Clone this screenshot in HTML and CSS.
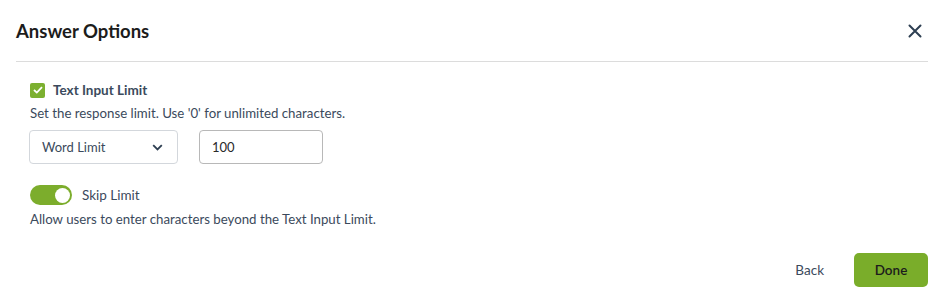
FILE: index.html
```html
<!DOCTYPE html>
<html lang="en">
<head>
    <meta charset="UTF-8">
    <title>Answer Options</title>
    <link rel="stylesheet" href="styles.css">
</head>
<body>
    <div class="modal">
        <header class="modal-header">
            <h2>Answer Options</h2>
            <button class="close-btn" aria-label="Close">
                <svg width="14" height="14" viewBox="0 0 14 14">
                    <path d="M1.5 1.5 L12.5 12.5 M12.5 1.5 L1.5 12.5" stroke="#2e3f52" stroke-width="2" stroke-linecap="round"/>
                </svg>
            </button>
        </header>

        <section class="modal-body">
            <label class="check-row">
                <span class="checkbox">
                    <svg width="10" height="8" viewBox="0 0 10 8">
                        <path d="M1 4 L3.8 6.6 L9 1.2" fill="none" stroke="#fff" stroke-width="1.8"/>
                    </svg>
                </span>
                <span class="check-label">Text Input Limit</span>
            </label>
            <p class="hint">Set the response limit. Use '0' for unlimited characters.</p>

            <div class="limit-row">
                <div class="select">
                    <span>Word Limit</span>
                    <svg width="11" height="7" viewBox="0 0 11 7">
                        <path d="M1.2 1.2 L5.5 5.5 L9.8 1.2" fill="none" stroke="#2e3f52" stroke-width="1.8"/>
                    </svg>
                </div>
                <div class="text-input">100</div>
            </div>

            <div class="toggle-row">
                <span class="toggle"><span class="knob"></span></span>
                <span class="toggle-label">Skip Limit</span>
            </div>
            <p class="hint">Allow users to enter characters beyond the Text Input Limit.</p>
        </section>

        <footer class="modal-footer">
            <button class="btn-back">Back</button>
            <button class="btn-done">Done</button>
        </footer>
    </div>
</body>
</html>
```

FILE: styles.css
```css
body {
    margin: 0;
    font-family: 'Lato', 'Noto Sans', sans-serif;
    background-color: #fff;
    color: #333;
}

.modal {
    width: 952px;
    height: 296px;
    box-sizing: border-box;
    padding: 0 24px 0 16px;
}

.modal-header {
    display: flex;
    justify-content: space-between;
    align-items: center;
    height: 61px;
    border-bottom: 1px solid #dcdcdc;
}

.modal-header h2 {
    margin: 0;
    font-size: 18.5px;
    font-weight: 700;
    color: #1c1c1c;
}

.close-btn {
    border: none;
    background: none;
    padding: 0;
    margin-right: 6px;
    display: flex;
    cursor: pointer;
}

.modal-body {
    padding: 20px 0 0 14px;
}

.check-row {
    display: flex;
    align-items: center;
    gap: 8px;
    height: 16px;
}

.checkbox {
    width: 15px;
    height: 15px;
    border-radius: 2px;
    background-color: #7cb030;
    display: flex;
    align-items: center;
    justify-content: center;
}

.check-label {
    font-size: 13.5px;
    font-weight: 700;
    color: #3b4a5c;
}

.hint {
    margin: 7px 0 0;
    font-size: 13.25px;
    color: #3b4a5c;
    line-height: 16px;
}

.limit-row {
    display: flex;
    gap: 21px;
    margin-top: 9px;
    margin-left: -1px;
}

.select {
    width: 149px;
    height: 34px;
    box-sizing: border-box;
    border: 1px solid #d3d7dc;
    border-radius: 4px;
    padding: 0 14px 0 12px;
    display: flex;
    align-items: center;
    justify-content: space-between;
    font-size: 13px;
    color: #3b4a5c;
}

.text-input {
    width: 124px;
    height: 34px;
    box-sizing: border-box;
    border: 1px solid #b8b8b8;
    border-radius: 4px;
    padding: 0 12px;
    display: flex;
    align-items: center;
    font-size: 13px;
    color: #2a2a2a;
}

.toggle-row {
    display: flex;
    align-items: center;
    gap: 10px;
    margin-top: 21px;
}

.toggle {
    width: 42px;
    height: 20px;
    border-radius: 10px;
    background-color: #7cad2c;
    display: flex;
    align-items: center;
    justify-content: flex-end;
    padding: 0 2px;
    box-sizing: border-box;
}

.knob {
    width: 15px;
    height: 15px;
    border-radius: 50%;
    background-color: #fff;
}

.toggle-label {
    font-size: 13.5px;
    color: #3b4a5c;
}

.toggle-row + .hint {
    margin-top: 6px;
}

.modal-footer {
    display: flex;
    justify-content: flex-end;
    align-items: center;
    gap: 30px;
    margin-top: 26px;
}

.btn-back {
    border: none;
    background: none;
    font-family: inherit;
    font-size: 13.5px;
    color: #3b4a5c;
    padding: 0;
    cursor: pointer;
}

.btn-done {
    width: 74px;
    height: 34px;
    border: none;
    border-radius: 5px;
    background-color: #7aad2a;
    font-family: inherit;
    font-size: 13.5px;
    font-weight: 600;
    color: #1c1c1c;
    cursor: pointer;
}
```
